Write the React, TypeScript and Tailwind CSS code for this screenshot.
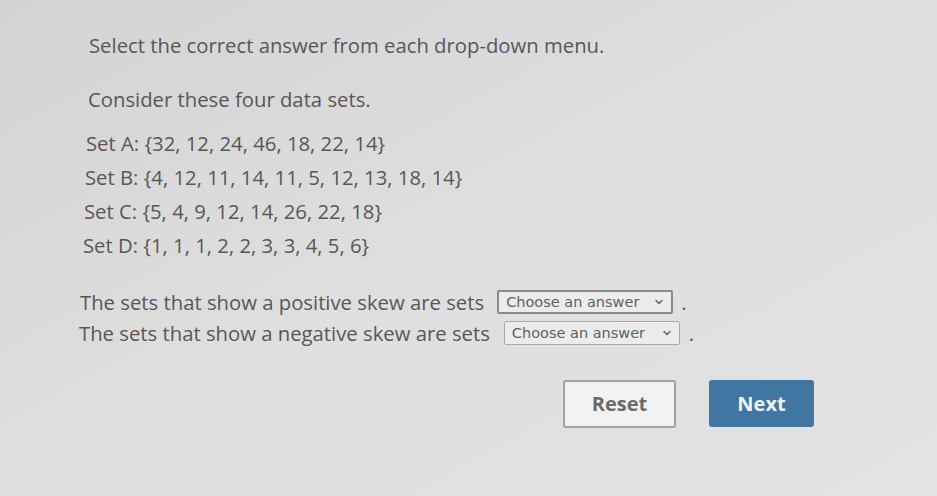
import { ChevronDown } from "lucide-react";

const sets = [
  { label: "Set A", values: "{32, 12, 24, 46, 18, 22, 14}", pad: "pl-[86px]" },
  { label: "Set B", values: "{4, 12, 11, 14, 11, 5, 12, 13, 18, 14}", pad: "pl-[85px]" },
  { label: "Set C", values: "{5, 4, 9, 12, 14, 26, 22, 18}", pad: "pl-[84px]" },
  { label: "Set D", values: "{1, 1, 1, 2, 2, 3, 3, 4, 5, 6}", pad: "pl-[83px]" },
];

function AnswerSelect({ focused }: { focused?: boolean }) {
  return (
    <span
      className={`inline-flex items-center justify-between h-[24px] w-[176px] pl-[7px] pr-[6px] bg-[#ececec] rounded-[2px] font-['DejaVu_Sans',sans-serif] text-[14.5px] text-[#606060] whitespace-nowrap ${
        focused ? "border-2 border-[#8a8a8a]" : "border border-[#a9a9a9]"
      }`}
    >
      <span>Choose an answer</span>
      <ChevronDown size={12} strokeWidth={3} className="text-[#666] shrink-0" />
    </span>
  );
}

export default function App() {
  return (
    <div className="w-[937px] h-[496px] overflow-hidden bg-linear-to-br from-[#d3d3d3] via-[#dfdfdf] to-[#e3e3e3] font-['Open_Sans',sans-serif] text-[#575757] text-[20.3px] leading-none">
      <div className="pt-[35px]">
        <p className="pl-[89px] h-[20px]">Select the correct answer from each drop-down menu.</p>
        <p className="pl-[88px] mt-[34px] h-[20px]">Consider these four data sets.</p>
        <div className="mt-[24px] flex flex-col gap-[14px]">
          {sets.map(s => (
            <p key={s.label} className={`${s.pad} h-[20px]`}>
              {s.label}: {s.values}
            </p>
          ))}
        </div>
        <div className="mt-[35px] flex flex-col gap-[7px]">
          <div className="pl-[80px] flex items-center">
            <span className="mr-[13px]">The sets that show a positive skew are sets</span>
            <AnswerSelect focused />
            <span className="ml-[8px]">.</span>
          </div>
          <div className="pl-[79px] flex items-center">
            <span className="mr-[14px]">The sets that show a negative skew are sets</span>
            <AnswerSelect />
            <span className="ml-[9px]">.</span>
          </div>
        </div>
        <div className="mt-[35px] pl-[563px] flex gap-[33px]">
          <button className="w-[113px] h-[48px] bg-[#f2f2f2] border-2 border-[#a2a2a2] rounded-[3px] text-[20px] font-bold text-[#6a6a6a]">
            Reset
          </button>
          <button className="w-[105px] h-[47px] bg-[#3f76a2] rounded-[3px] text-[20px] font-bold text-[#eef4f8]">
            Next
          </button>
        </div>
      </div>
    </div>
  );
}
